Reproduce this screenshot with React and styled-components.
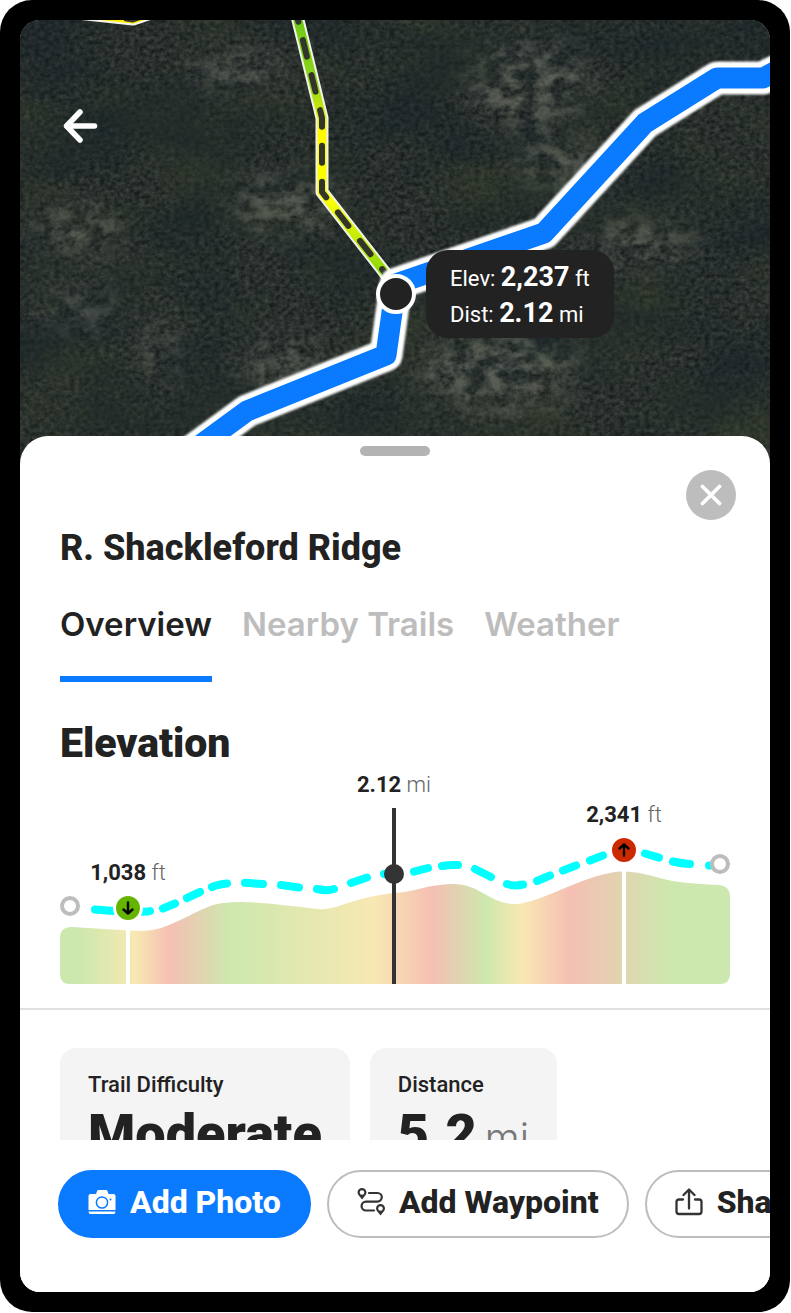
import React, { useState } from "react";
import styled, { createGlobalStyle } from "styled-components";

const heading = `"Roboto", "Liberation Sans", Arial, sans-serif`;
const label = `"Inter", "Liberation Sans", Arial, sans-serif`;
const body = `"Roboto", "Liberation Sans", Arial, sans-serif`;

const GlobalStyle = createGlobalStyle`
  * {
    box-sizing: border-box;
  }
  body {
    margin: 0;
    background: #fff;
    color: #222;
    font-family: ${body};
  }
  button {
    border: none;
    background: none;
    padding: 0;
    color: inherit;
    cursor: pointer;
  }
`;

const Page = styled.div`
  display: flex;
  height: 100vh;
  min-height: 1100px;
  padding: 0 1px 1px 0;
`;
const Device = styled.div`
  display: flex;
  flex: 1;
  min-width: 0;
  padding: 20px;
  border-radius: 32px;
  background: #000;
`;
const Screen = styled.main`
  display: flex;
  flex-direction: column;
  flex: 1;
  min-width: 0;
  overflow: hidden;
  border-radius: 20px;
  background: #fff;
`;

const MapArea = styled.section`
  position: relative;
  flex: none;
  height: 446px;
  background: #2b3130;
`;
const MapCanvas = styled.svg`
  display: block;
  width: 100%;
  height: 100%;
`;
const BackButton = styled.button`
  position: absolute;
  top: 86px;
  left: 40px;
  width: 40px;
  height: 40px;
`;
const Tooltip = styled.div`
  position: absolute;
  top: 230px;
  left: calc(50% + 31px);
  padding: 11px 24px 5px;
  border-radius: 22px;
  background: #222;
  color: #fff;
  font-size: 22px;
  line-height: 36px;
  white-space: nowrap;
`;
const TooltipValue = styled.strong`
  font-size: 27px;
  font-weight: 700;
  line-height: 1;
`;

const Sheet = styled.section`
  position: relative;
  display: flex;
  flex-direction: column;
  flex: 1;
  min-height: 0;
  margin-top: -30px;
  border-radius: 28px 28px 0 0;
  background: #fff;
`;
const Handle = styled.div`
  align-self: center;
  flex: none;
  width: 70px;
  height: 10px;
  margin-top: 10px;
  border-radius: 5px;
  background: #b3b3b3;
`;
const CloseButton = styled.button`
  display: flex;
  align-items: center;
  justify-content: center;
  align-self: flex-end;
  flex: none;
  width: 50px;
  height: 50px;
  margin: 14px 34px 0 0;
  border-radius: 50%;
  background: #bdbdbd;
`;
const Title = styled.h1`
  margin: 8px 40px 0;
  font-family: ${heading};
  font-size: 36px;
  font-weight: 800;
  line-height: 40px;
`;
const Tabs = styled.nav`
  display: flex;
  gap: 30px;
  margin-top: 36px;
  padding: 0 40px;
`;
const Tab = styled.button`
  height: 78px;
  padding-bottom: 32px;
  border-bottom: 6px solid ${(props) => (props.$active ? "#0a7aff" : "transparent")};
  color: ${(props) => (props.$active ? "#222" : "#bdbdbd")};
  font-family: ${label};
  font-size: 33px;
  font-weight: 600;
  line-height: 40px;
  white-space: nowrap;
`;
const Elevation = styled.section`
  padding: 38px 40px 24px;
  border-bottom: 2px solid #e0e0e0;
`;
const SectionTitle = styled.h2`
  margin: 0;
  font-family: ${heading};
  font-size: 41px;
  font-weight: 900;
  line-height: 46px;
`;
const Chart = styled.svg`
  display: block;
  width: 100%;
  margin-top: 4px;
  font-family: ${body};
  font-size: 22px;
`;

const Stats = styled.section`
  display: flex;
  align-items: flex-start;
  flex: 1 1 0;
  gap: 20px;
  min-height: 0;
  overflow: hidden;
  padding: 38px 40px 0;
`;
const Card = styled.div`
  flex: none;
  padding: 22px 28px;
  border-radius: 16px;
  background: #f4f4f4;
`;
const CardLabel = styled.div`
  font-size: 22px;
  font-weight: 500;
  line-height: 30px;
`;
const CardValue = styled.div`
  font-family: ${heading};
  font-size: 54px;
  font-weight: 900;
  line-height: 68px;
  white-space: nowrap;
`;
const CardUnit = styled.span`
  margin-left: 8px;
  color: #777;
  font-family: ${label};
  font-size: 40px;
  font-weight: 300;
`;

const Actions = styled.footer`
  display: flex;
  flex: none;
  gap: 16px;
  overflow: hidden;
  padding: 30px 0 54px 38px;
`;
const ActionButton = styled.button`
  display: flex;
  align-items: center;
  flex: none;
  gap: 14px;
  height: 68px;
  padding: 0 28px 4px;
  border: 2px solid ${(props) => (props.$primary ? "#0a7aff" : "#bdbdbd")};
  border-radius: 34px;
  background: ${(props) => (props.$primary ? "#0a7aff" : "#fff")};
  color: ${(props) => (props.$primary ? "#fff" : "#222")};
  font-family: ${heading};
  font-size: 32px;
  font-weight: 800;
  line-height: 36px;
  white-space: nowrap;
`;

const ROUTE = "M770 44 L743 58 L697 58 L625 103 L524 213 L376 264 L366 335 L227 391 L160 440";
const TRAIL = "M276 -8 L302 98 L302 172 L376 267";

const TrailMap = () => (
  <MapCanvas viewBox="0 0 750 446" preserveAspectRatio="xMidYMin slice" role="img" aria-label="Trail map">
    <defs>
      <filter id="ground" x="0" y="0" width="100%" height="100%" colorInterpolationFilters="sRGB">
        <feTurbulence type="fractalNoise" baseFrequency="0.2 0.24" numOctaves="4" seed="4" />
        <feColorMatrix values="0.25 0 0 0 0.035  0.24 0 0 0 0.065  0.22 0 0 0 0.065  0 0 0 0 1" />
      </filter>
      <filter id="shade" x="0" y="0" width="100%" height="100%" colorInterpolationFilters="sRGB">
        <feTurbulence type="fractalNoise" baseFrequency="0.009 0.014" numOctaves="6" seed="11" />
        <feColorMatrix values="0 0 0 0 0.09  0 0 0 0 0.13  0 0 0 0 0.16  2.6 0 0 0 -1.05" />
      </filter>
      <filter id="moss" x="0" y="0" width="100%" height="100%" colorInterpolationFilters="sRGB">
        <feTurbulence type="fractalNoise" baseFrequency="0.009 0.014" numOctaves="6" seed="27" />
        <feColorMatrix values="0 0 0 0 0.22  0 0 0 0 0.26  0 0 0 0 0.17  0 2.4 0 0 -0.95" />
      </filter>
      <filter id="scrub" x="-10%" y="-10%" width="120%" height="120%" colorInterpolationFilters="sRGB">
        <feGaussianBlur in="SourceGraphic" stdDeviation="16" result="patch" />
        <feTurbulence type="fractalNoise" baseFrequency="0.06 0.08" numOctaves="6" seed="8" />
        <feColorMatrix values="0 0 0 0 1  0 0 0 0 1  0 0 0 0 1  3 0 0 0 -1.1" result="grain" />
        <feComposite in="patch" in2="grain" operator="in" />
      </filter>
      <filter id="soft" x="-5%" y="-5%" width="110%" height="110%">
        <feGaussianBlur stdDeviation="1.200" />
      </filter>
      <linearGradient id="trail" gradientUnits="userSpaceOnUse" x1="0" y1="0" x2="0" y2="267">
        <stop offset="0" stopColor="#6fc916" />
        <stop offset="0.24" stopColor="#8fd51b" />
        <stop offset="0.42" stopColor="#fffa00" />
        <stop offset="0.68" stopColor="#fbff00" />
        <stop offset="1" stopColor="#76cf0c" />
      </linearGradient>
    </defs>
    <rect width="750" height="446" filter="url(#ground)" />
    <rect width="750" height="446" filter="url(#moss)" opacity="0.45" />
    <rect width="750" height="446" filter="url(#shade)" opacity="0.5" />
    <g filter="url(#scrub)" fill="#7d7f72" opacity="0.6">
      <ellipse cx="510" cy="65" rx="60" ry="42" />
      <ellipse cx="540" cy="142" rx="45" ry="24" />
      <ellipse cx="480" cy="352" rx="80" ry="40" />
      <ellipse cx="265" cy="185" rx="55" ry="30" />
      <ellipse cx="60" cy="210" rx="45" ry="22" />
      <ellipse cx="265" cy="345" rx="50" ry="22" />
      <ellipse cx="215" cy="50" rx="50" ry="18" />
      <ellipse cx="60" cy="290" rx="40" ry="16" />
      <ellipse cx="140" cy="330" rx="14" ry="36" />
      <ellipse cx="620" cy="220" rx="60" ry="20" />
    </g>
    <g fill="none" strokeLinejoin="round">
      <path d="M57 -7 L113 -1 L140 -10" stroke="#f4f4e8" strokeWidth="13" />
      <path d="M57 -7 L113 -1 L140 -10" stroke="#ffee00" strokeWidth="9" />
      <path d="M106 -1 L113 0 L124 -4" stroke="#3a3a2a" strokeWidth="5" strokeLinecap="round" />
      <path d={TRAIL} stroke="#f1f3e6" strokeWidth="13" />
      <path d={TRAIL} stroke="url(#trail)" strokeWidth="9" />
      <path
        d={TRAIL}
        stroke="#33352c"
        strokeWidth="6"
        strokeLinecap="round"
        strokeDasharray="17 19"
        strokeDashoffset="7"
      />
      <path d={ROUTE} stroke="#fff" strokeWidth="33" filter="url(#soft)" />
      <path d={ROUTE} stroke="#0a7aff" strokeWidth="21" />
    </g>
    <circle cx="376" cy="274" r="18" fill="#222" stroke="#fff" strokeWidth="4" />
  </MapCanvas>
);

const ArrowLeft = () => (
  <svg width="40" height="40" viewBox="0 0 40 40" fill="none" stroke="#fff" strokeWidth="5.500" strokeLinecap="round" strokeLinejoin="round">
    <path d="M34.500 20 H6.500 M20 6 L6.500 20 L20 34" />
  </svg>
);

const Cross = () => (
  <svg width="22" height="22" viewBox="0 0 22 22" fill="none" stroke="#fff" strokeWidth="3.800" strokeLinecap="round">
    <path d="M2.500 2.500 L19.500 19.500 M19.500 2.500 L2.500 19.500" />
  </svg>
);

const CameraIcon = () => (
  <svg width="28" height="28" viewBox="0 0 28 28" aria-hidden="true">
    <path
      fill="#fff"
      d="M10.500 2 H18 Q19.200 2 19.600 3.200 L20.500 6 H25.500 Q27.500 6 27.500 8 V22 H0.500 V8 Q0.500 6 2.500 6 H8 L9 3.200 Q9.400 2 10.500 2 Z"
    />
    <path fill="#fff" d="M0.500 23.500 H27.500 Q27.500 26 25.500 26 H2.500 Q0.500 26 0.500 23.500 Z" />
    <circle cx="14" cy="14.500" r="5.600" fill="none" stroke="#0a7aff" strokeWidth="1.500" />
    <circle cx="22.500" cy="11.500" r="1" fill="#0a7aff" />
  </svg>
);

const WaypointIcon = () => (
  <svg width="28" height="28" viewBox="0 0 28 28" aria-hidden="true">
    <path
      fill="#333"
      fillRule="evenodd"
      d="M5 0 A4.500 4.500 0 0 1 9.500 4.500 C9.500 7 7 8.500 5 11.500 C3 8.500 0.500 7 0.500 4.500 A4.500 4.500 0 0 1 5 0 Z M5 2.200 A2.300 2.300 0 1 0 5 6.800 A2.300 2.300 0 1 0 5 2.200 Z
        M23.500 16 A4.500 4.500 0 0 1 28 20.500 C28 23 25.500 24.500 23.500 27.500 C21.500 24.500 19 23 19 20.500 A4.500 4.500 0 0 1 23.500 16 Z M23.500 18.200 A2.300 2.300 0 1 0 23.500 22.800 A2.300 2.300 0 1 0 23.500 18.200 Z"
    />
    <path
      fill="none"
      stroke="#333"
      strokeWidth="2.200"
      strokeLinecap="round"
      d="M12 5 H20.500 A4.300 4.300 0 0 1 20.500 13.600 H9 A4.400 4.400 0 0 0 9 22.500 H17"
    />
  </svg>
);

const ShareIcon = () => (
  <svg width="28" height="28" viewBox="0 0 28 28" fill="none" stroke="#333" strokeWidth="2.300" strokeLinecap="round" strokeLinejoin="round" aria-hidden="true">
    <path d="M8 11.500 H4 Q1.500 11.500 1.500 14 V23.500 Q1.500 26 4 26 H24 Q26.500 26 26.500 23.500 V14 Q26.500 11.500 24 11.500 H20" />
    <path d="M14 20.500 V2 M8.500 7 L14 1.500 L19.500 7" />
  </svg>
);

const gradeStops = [
  [0, "#cde8ae"],
  [20, "#cde8ae"],
  [75, "#f8e8b2"],
  [110, "#f5bfb3"],
  [170, "#cde8ae"],
  [315, "#f8e8b2"],
  [372, "#f5bfb3"],
  [426, "#cde8ae"],
  [462, "#f8e8b2"],
  [510, "#f5bfb3"],
  [610, "#cde8ae"],
  [670, "#cde8ae"],
];

const dashes = `M35 139.500 L54 141 M82 141.700 Q87 142 90 141 M103 138.500 L115 133.500 M127 128 L140 122
  M152 117 Q158 114.300 167 113.500 M185 112.800 L203 114 M221 115 L239 117.500 M257 119 Q267 121.500 274 119
  M291 113 L307 107.500 M324 104 L334 102 M354 101.700 L368 98 M382 96 Q390 94.600 398 95 M415 99 L431 107
  M447 114 Q455 116.500 463 114.500 M477 111 L490 105.500 M503 100.500 L516 95.500 M530 90.500 L543 85.500
  M585 83.500 L599 87.700 M613 91.500 Q621 93.500 630 94 M649 95.500 L655 95.500`;

const ChartLabel = ({ x, y, value, unit }) => (
  <text x={x} y={y} textAnchor="middle" fill="#222">
    <tspan fontWeight="700">{value}</tspan>
    <tspan fill="#666" fontWeight="300"> {unit}</tspan>
  </text>
);

const ElevationChart = () => (
  <Chart viewBox="0 0 670 214" role="img" aria-label="Elevation profile">
    <defs>
      <linearGradient id="grade" gradientUnits="userSpaceOnUse" x1="0" y1="0" x2="670" y2="0">
        {gradeStops.map(([x, color]) => (
          <stop key={x} offset={x / 670} stopColor={color} />
        ))}
      </linearGradient>
    </defs>
    <path
      fill="url(#grade)"
      d="M0 168 Q0 157 12 157 L68 160.500 C86 161.500 96 161.500 118 151 C140 141 150 134 164 133
        C190 130 220 135 258 139 C276 141 290 128 334 123 C352 123 368 114 393 114
        C420 114 430 134 455 134 C480 134 530 101 564 101.500 C585 102 595 108 613 111
        C630 114 645 114 659 115 Q670 116 670 127 V204 Q670 214 660 214 H10 Q0 214 0 204 Z"
    />
    <rect x="66" y="155" width="4" height="59" fill="#fff" />
    <rect x="562" y="98" width="4" height="116" fill="#fff" />
    <path d={dashes} fill="none" stroke="#00ffff" strokeWidth="8" strokeLinecap="round" />
    <rect x="332" y="38" width="4" height="176" fill="#333" />
    <circle cx="334" cy="104" r="10" fill="#333" />
    <circle cx="10" cy="136" r="8" fill="#fff" stroke="#bdbdbd" strokeWidth="4" />
    <circle cx="660" cy="94" r="8" fill="#fff" stroke="#bdbdbd" strokeWidth="4" />
    <circle cx="68" cy="138" r="13.500" fill="#65b500" stroke="#fff" strokeWidth="3" />
    <circle cx="564" cy="80" r="13.500" fill="#cc2900" stroke="#fff" strokeWidth="3" />
    <g fill="none" stroke="#000" strokeWidth="2.400" strokeLinecap="round" strokeLinejoin="round">
      <path d="M68 132.500 V143.500 M63.500 139.500 L68 143.500 L72.500 139.500" />
      <path d="M564 85.500 V74.500 M559.500 78.500 L564 74.500 L568.500 78.500" />
    </g>
    <ChartLabel x="68" y="110" value="1,038" unit="ft" />
    <ChartLabel x="334" y="22" value="2.12" unit="mi" />
    <ChartLabel x="564" y="52" value="2,341" unit="ft" />
  </Chart>
);

const tabs = ["Overview", "Nearby Trails", "Weather"];

const App = () => {
  const [active, setActive] = useState("Overview");

  return (
    <Page>
      <GlobalStyle />
      <Device>
        <Screen>
          <MapArea>
            <TrailMap />
            <BackButton aria-label="Back">
              <ArrowLeft />
            </BackButton>
            <Tooltip>
              <div>
                Elev: <TooltipValue>2,237</TooltipValue> ft
              </div>
              <div>
                Dist: <TooltipValue>2.12</TooltipValue> mi
              </div>
            </Tooltip>
          </MapArea>
          <Sheet>
            <Handle />
            <CloseButton aria-label="Close">
              <Cross />
            </CloseButton>
            <Title>R. Shackleford Ridge</Title>
            <Tabs>
              {tabs.map((tab) => (
                <Tab key={tab} $active={tab === active} onClick={() => setActive(tab)}>
                  {tab}
                </Tab>
              ))}
            </Tabs>
            <Elevation>
              <SectionTitle>Elevation</SectionTitle>
              <ElevationChart />
            </Elevation>
            <Stats>
              <Card>
                <CardLabel>Trail Difficulty</CardLabel>
                <CardValue>Moderate</CardValue>
              </Card>
              <Card>
                <CardLabel>Distance</CardLabel>
                <CardValue>
                  5.2<CardUnit>mi</CardUnit>
                </CardValue>
              </Card>
            </Stats>
            <Actions>
              <ActionButton $primary>
                <CameraIcon />
                Add Photo
              </ActionButton>
              <ActionButton>
                <WaypointIcon />
                Add Waypoint
              </ActionButton>
              <ActionButton>
                <ShareIcon />
                Share
              </ActionButton>
            </Actions>
          </Sheet>
        </Screen>
      </Device>
    </Page>
  );
};

export default App;
